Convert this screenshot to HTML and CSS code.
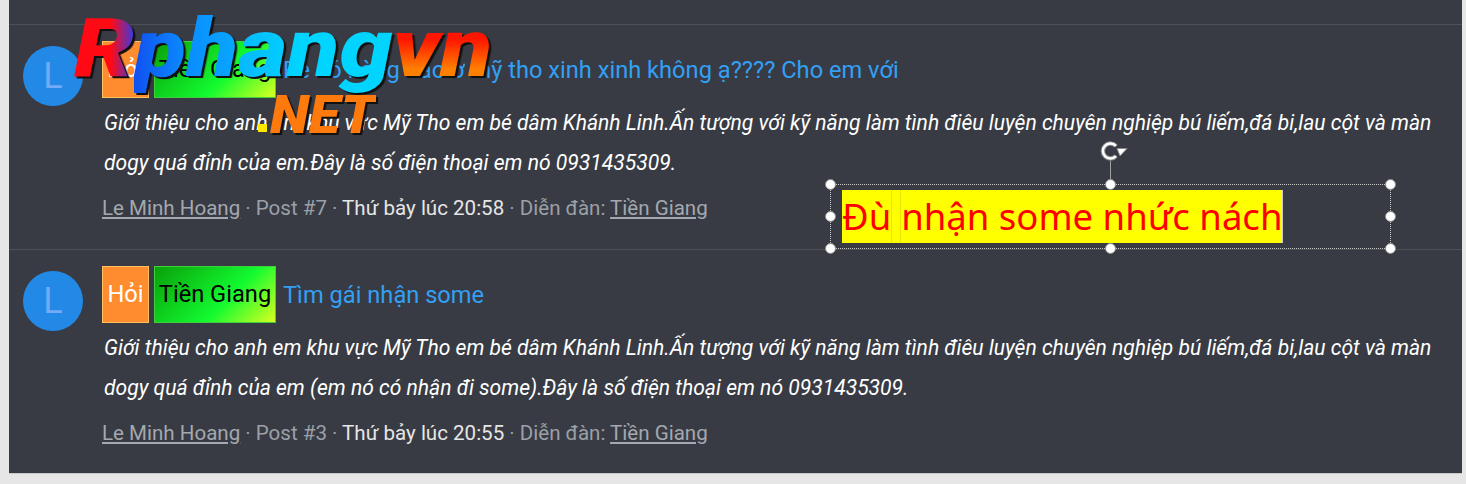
FILE: index.html
```html
<!DOCTYPE html>
<html lang="vi">
<head>
  <meta charset="UTF-8" />
  <title>Kết quả tìm kiếm</title>
  <link rel="stylesheet" href="styles.css">
</head>
<body>
  <div class="page">
    <div class="post-list">
      <!-- POST 7 -->
      <div class="post">
        <div class="avatar">L</div>
        <div class="post-body">
          <h3 class="post-title">
            <span class="tag tag-ask">Hỏi</span>
            <span class="tag tag-place">Tiền Giang</span>
            <a href="#">Re có hàng nào ở mỹ tho xinh xinh không ạ???? Cho em với</a>
          </h3>
          <p class="snippet">Giới thiệu cho anh em khu vực Mỹ Tho em bé dâm Khánh Linh.Ấn tượng với kỹ năng làm tình điêu luyện chuyên nghiệp bú liếm,đá bi,lau cột và màn dogy quá đỉnh của em.Đây là số điện thoại em nó 0931435309.</p>
          <div class="meta"><a href="#">Le Minh Hoang</a> · Post #7 · <span class="time">Thứ bảy lúc 20:58</span> · Diễn đàn: <a href="#">Tiền Giang</a></div>
        </div>
      </div>

      <!-- POST 3 -->
      <div class="post">
        <div class="avatar">L</div>
        <div class="post-body">
          <h3 class="post-title">
            <span class="tag tag-ask">Hỏi</span>
            <span class="tag tag-place">Tiền Giang</span>
            <a href="#">Tìm gái nhận some</a>
          </h3>
          <p class="snippet">Giới thiệu cho anh em khu vực Mỹ Tho em bé dâm Khánh Linh.Ấn tượng với kỹ năng làm tình điêu luyện chuyên nghiệp bú liếm,đá bi,lau cột và màn dogy quá đỉnh của em (em nó có nhận đi some).Đây là số điện thoại em nó 0931435309.</p>
          <div class="meta"><a href="#">Le Minh Hoang</a> · Post #3 · <span class="time">Thứ bảy lúc 20:55</span> · Diễn đàn: <a href="#">Tiền Giang</a></div>
        </div>
      </div>
    </div>

    <!-- logo -->
    <div class="logo">
      <span class="logo-r">R</span><span class="logo-p">p</span><span class="logo-h">h</span><span class="logo-ang">ang</span><span class="logo-vn">vn</span>
    </div>
    <div class="logo logo-sub"><span class="logo-net">NET</span></div>
    <span class="logo-dot"></span>

    <!-- text box -->
    <div class="selection">
      <svg class="rotate" width="32" height="28" viewBox="0 0 32 28">
        <path d="M19 18a7.500 7.500 0 1 1 0-10" fill="none" stroke="#8a8a8a" stroke-width="4.500"/>
        <path d="M19 18a7.500 7.500 0 1 1 0-10" fill="none" stroke="#fff" stroke-width="2.500"/>
        <path d="M20 10.500h10l-7 7.500z" fill="#fff" stroke="#8a8a8a"/>
      </svg>
      <span class="stem"></span>
      <span class="handle h-tl"></span><span class="handle h-tc"></span><span class="handle h-tr"></span>
      <span class="handle h-ml"></span><span class="handle h-mr"></span>
      <span class="handle h-bl"></span><span class="handle h-bc"></span><span class="handle h-br"></span>
      <span class="marked">Đù<span class="gap"> </span>nhận some nhức nách</span>
    </div>
  </div>
</body>
</html>
```
FILE: styles.css
```css
* {
  box-sizing: border-box;
}
html, body {
  height: 100%;
}
body {
  margin: 0;
  background: #e6e6e6;
  font-family: Roboto, "Liberation Sans", sans-serif;
  overflow: hidden;
}
.page {
  position: relative;
  height: 100%;
}
.post-list {
  margin: 0 4px 0 9px;
  height: 474px;
  background: #383b43;
  border-bottom: 1px solid #c4c8cc;
  padding-top: 24px;
}
.post {
  display: flex;
  height: 225px;
  padding: 16px 13px 0 14px;
  border-top: 1px solid #4d5056;
}
.avatar {
  flex: none;
  width: 60px;
  height: 60px;
  margin-top: 5px;
  border-radius: 50%;
  background: #228ae6;
  color: #74a9f5;
  font-size: 36px;
  line-height: 60px;
  text-align: center;
}
.post-body {
  margin-left: 19px;
  min-width: 0;
}
.post-title {
  margin: 0;
  display: flex;
  align-items: center;
  font-size: 23.650px;
  font-weight: 400;
  height: 57px;
}
.post-title a {
  color: #33a0f5;
  text-decoration: none;
  margin-left: 7px;
}
.tag {
  display: block;
  height: 57px;
  line-height: 55px;
  border: 1px solid;
  text-align: center;
}
.tag-ask {
  width: 47px;
  margin-right: 5px;
  background: #ff8c2e;
  border-color: #ffc15e;
  color: #fff;
}
.tag-place {
  width: 122px;
  background: linear-gradient(135deg, #0aa00a, #12fb30 60%, #d8ff20);
  border-color: #3fd03f;
  color: #000;
}
.snippet {
  margin: 5px 0 0 2px;
  width: 1345px;
  color: #fff;
  font-size: 21.080px;
  font-style: italic;
  font-weight: 400;
  line-height: 40px;
}
.meta {
  margin-top: 12px;
  color: #9ba0a8;
  font-size: 20.550px;
  line-height: 26px;
}
.meta a {
  color: #a4a8af;
}
.time {
  color: #e6e6e6;
}

/* logo */
.logo {
  position: absolute;
  left: 74px;
  top: -1px;
  height: 100px;
  font-family: Roboto, "Liberation Sans", sans-serif;
  font-weight: 900;
  font-style: italic;
  white-space: nowrap;
  font-size: 81px;
  line-height: 100px;
  transform: scaleX(1.175);
  transform-origin: left top;
  filter: drop-shadow(2px 2px 0 #111);
}
.logo span {
  background-clip: text;
  -webkit-background-clip: text;
  color: transparent;
}
.logo-r {
  background-image: linear-gradient(90deg, #ff0a14 62%, #3a3ae0);
}
.logo-p {
  background-image: linear-gradient(90deg, #1150f0, #0a8cff);
}
.logo-h {
  background-image: linear-gradient(90deg, #0a8cff, #08a8ff);
}
.logo-ang {
  background-image: linear-gradient(90deg, #08b8ff, #00d4ff 40%);
}
.logo-vn {
  background-image: linear-gradient(180deg, #ff1500 40%, #ff8000 72%);
}
.logo-sub {
  left: 270px;
  top: 80px;
  height: 70px;
  font-size: 54px;
  line-height: 70px;
  transform: scaleX(1.06);
}
.logo-net {
  background-image: linear-gradient(#ff7a0c, #ff7a0c);
}
.logo-dot {
  position: absolute;
  left: 258px;
  top: 124px;
  width: 9px;
  height: 8px;
  background: #ffe800;
}

/* selected text box */
.selection {
  position: absolute;
  left: 830px;
  top: 184px;
  width: 561px;
  height: 65px;
  border: 1px dotted #c8c8c8;
}
.marked {
  position: absolute;
  left: 11px;
  top: 5px;
  height: 53px;
  background: #ffff00;
  color: #ff0000;
  font-family: "Noto Sans", sans-serif;
  font-size: 36.500px;
  font-weight: 400;
  line-height: 53px;
  white-space: nowrap;
  border-right: 1px solid #c8c8c8;
}
.gap {
  display: inline-block;
  width: 10px;
  height: 53px;
  vertical-align: top;
  border-left: 1px solid #e6e600;
  border-right: 1px solid #e6e600;
}
.handle {
  position: absolute;
  width: 11px;
  height: 11px;
  border-radius: 50%;
  background: #fff;
  border: 1px solid #8a8a8a;
  z-index: 1;
}
.h-tl { left: -6px; top: -6px; }
.h-tc { left: 274px; top: -6px; }
.h-tr { right: -6px; top: -6px; }
.h-ml { left: -6px; top: 26px; }
.h-mr { right: -6px; top: 26px; }
.h-bl { left: -6px; bottom: -6px; }
.h-bc { left: 274px; bottom: -6px; }
.h-br { right: -6px; bottom: -6px; }
.stem {
  position: absolute;
  left: 279px;
  top: -24px;
  width: 1px;
  height: 24px;
  background: #a0a0a0;
}
.rotate {
  position: absolute;
  left: 266px;
  top: -47px;
}
```
